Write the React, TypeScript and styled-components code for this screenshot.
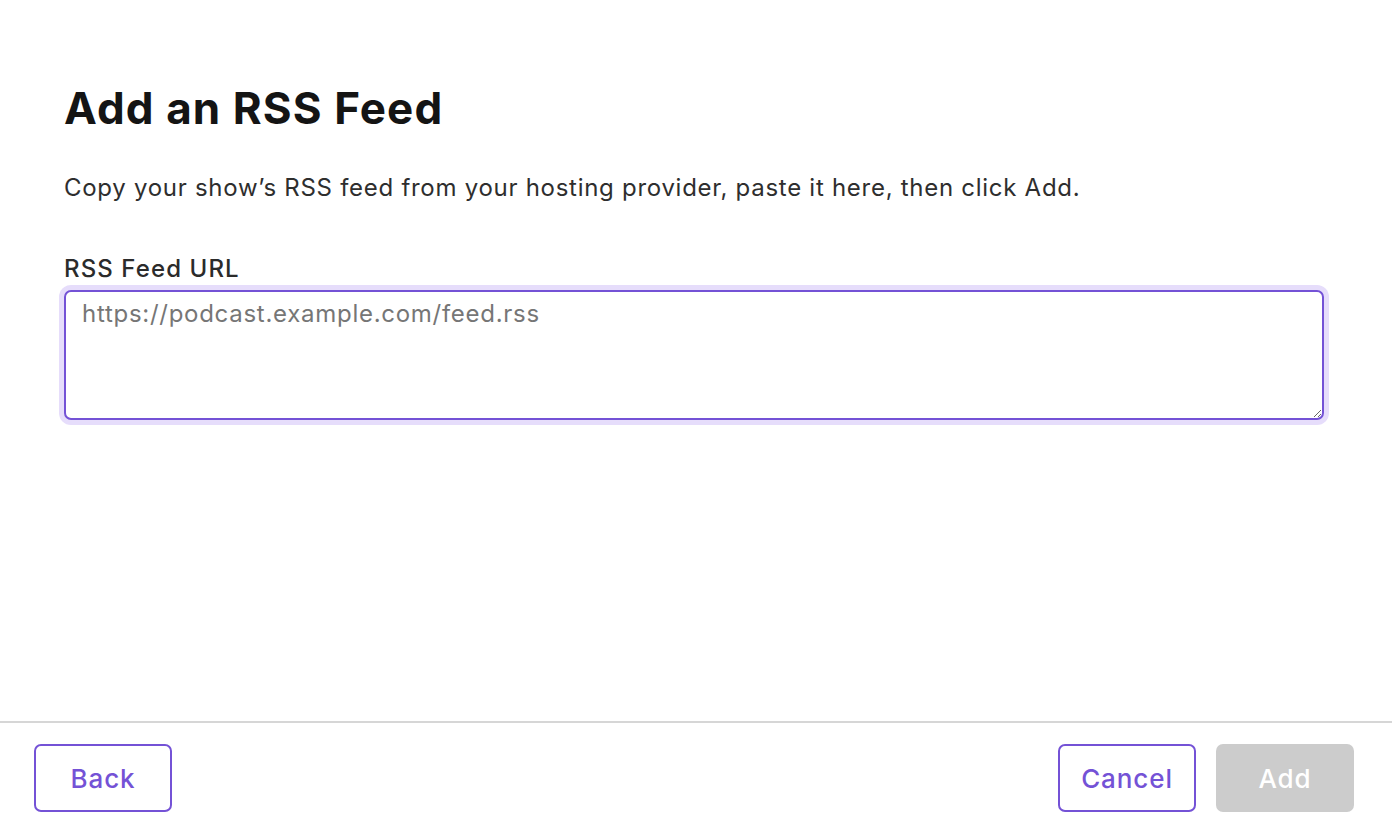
import React from "react";
import styled, { createGlobalStyle } from "styled-components";

const Global = createGlobalStyle`
  html, body { margin: 0; padding: 0; background: #fff; }
  body { font-family: Inter, "Noto Sans", sans-serif; color: #1a1a1a; }
  * { box-sizing: border-box; }
`;

const Page = styled.div`
  display: flex;
  flex-direction: column;
  height: 824px;
`;

const Main = styled.main`
  flex: 1;
  padding: 80px 68px 0 64px;
`;

const Title = styled.h1`
  margin: 0;
  font-size: 44px;
  line-height: 56px;
  font-weight: 700;
  letter-spacing: 1.1px;
  color: #141414;
`;

const Lead = styled.p`
  margin: 37px 0 0;
  font-size: 24px;
  line-height: 30px;
  letter-spacing: 0.72px;
  color: #2e2e2e;
`;

const Label = styled.label`
  display: block;
  margin-top: 51px;
  font-size: 24px;
  line-height: 30px;
  font-weight: 500;
  letter-spacing: 1.1px;
  color: #2b2b2b;
`;

const Field = styled.textarea`
  display: block;
  width: 100%;
  height: 130px;
  margin-top: 6px;
  padding: 7px 16px;
  border: 2px solid #7452d6;
  border-radius: 7px;
  box-shadow: 0 0 0 5px #e6ddfb;
  font-family: Inter, "Noto Sans", sans-serif;
  font-size: 24px;
  line-height: 30px;
  letter-spacing: 0.72px;
  color: #222;
  outline: none;
  resize: vertical;
  &::placeholder { color: #767676; }
`;

const Footer = styled.footer`
  display: flex;
  align-items: flex-start;
  justify-content: space-between;
  border-top: 2px solid #d6d6d6;
  padding: 21px 38px 12px 34px;
`;

const Group = styled.div`
  display: flex;
  gap: 20px;
`;

const Button = styled.button<{ $variant?: "outline" | "disabled" }>`
  height: 68px;
  width: 138px;
  border-radius: 7px;
  font-family: Inter, "Noto Sans", sans-serif;
  font-size: 26px;
  font-weight: 500;
  letter-spacing: 0.9px;
  cursor: pointer;
  ${(p) =>
    p.$variant === "disabled"
      ? `background: #cccccc; color: #fff; border: none;`
      : `background: #fff; color: #7452d6; border: 2px solid #7452d6;`}
`;

export default function App() {
  return (
    <>
      <Global />
      <Page>
        <Main>
          <Title>Add an RSS Feed</Title>
          <Lead>
            Copy your show’s RSS feed from your hosting provider, paste it here, then click Add.
          </Lead>
          <Label htmlFor="rss">RSS Feed URL</Label>
          <Field id="rss" placeholder="https://podcast.example.com/feed.rss" />
        </Main>
        <Footer>
          <Button $variant="outline">Back</Button>
          <Group>
            <Button $variant="outline">Cancel</Button>
            <Button $variant="disabled" disabled>
              Add
            </Button>
          </Group>
        </Footer>
      </Page>
    </>
  );
}
